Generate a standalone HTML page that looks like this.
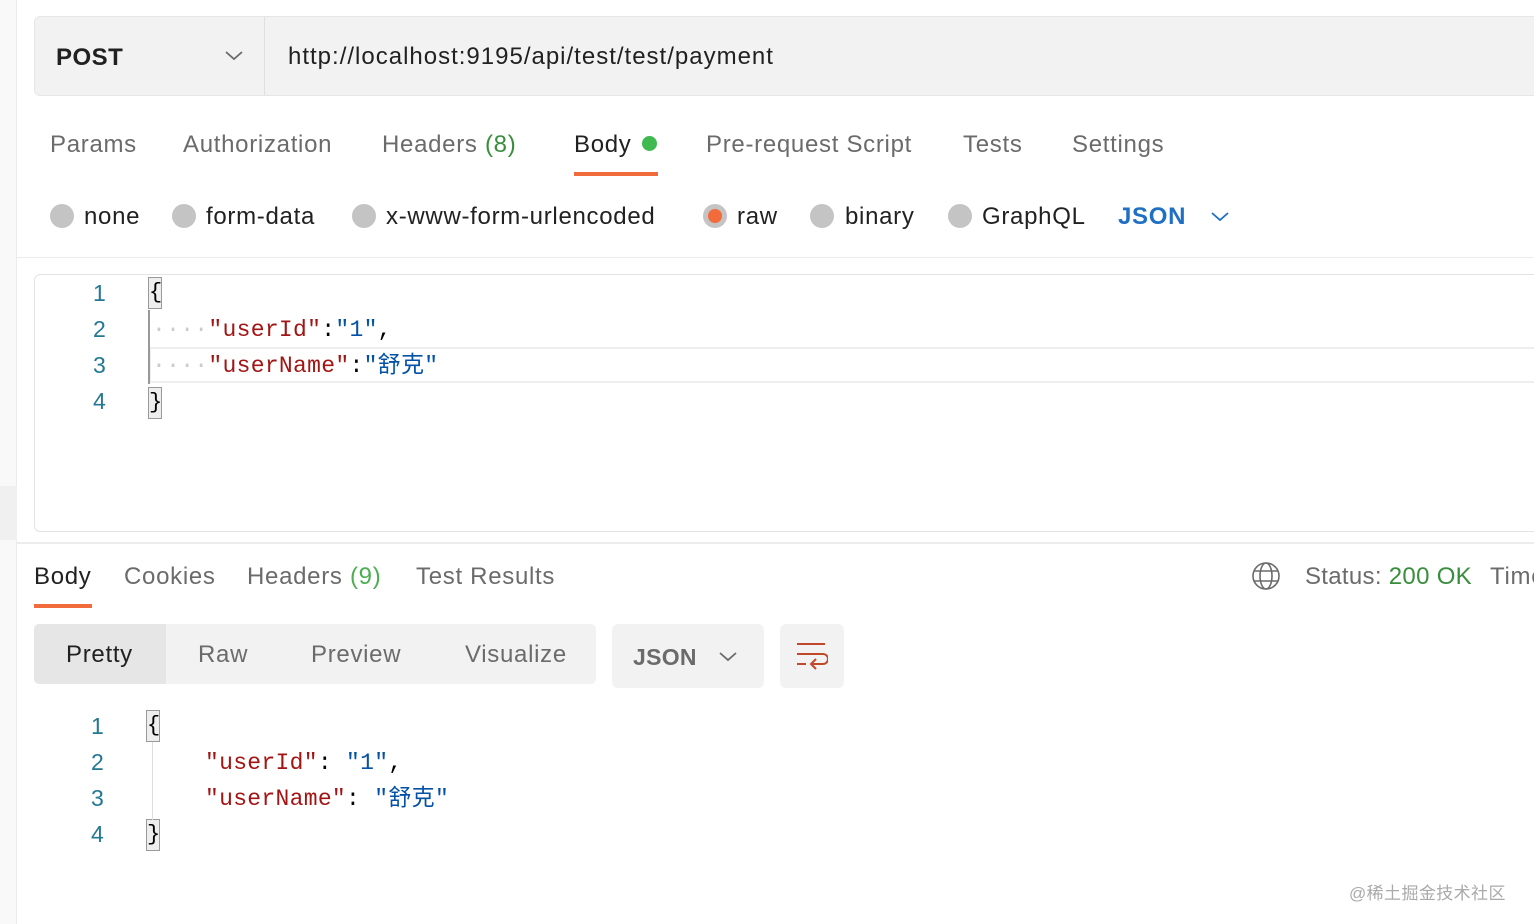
<!DOCTYPE html>
<html><head><meta charset="utf-8"><style>
*{margin:0;padding:0;box-sizing:border-box}
body{width:1534px;height:924px;background:#fff;position:relative;overflow:hidden;font-family:"Liberation Sans","Noto Sans CJK SC",sans-serif;}
.a{position:absolute;white-space:nowrap}
.t{font-size:24px;color:#6b6b6b;line-height:30px;letter-spacing:0.7px}
.m{font-family:"Liberation Mono","Noto Sans CJK SC",monospace;font-size:23px;line-height:30px;letter-spacing:0.3px}
.r{color:#a31515}.b{color:#0451a5}.n{color:#237893;font-family:"Liberation Sans",sans-serif;font-size:23px}
.rad{position:absolute;width:24px;height:24px;border-radius:50%;background:#c4c4c4;top:204px}
.br{position:absolute;width:14px;height:32px;background:#eee;border:1px solid #999;font-family:"Liberation Mono",monospace;font-size:22px;line-height:30px;text-align:center;color:#000}
</style></head><body>
<div class="a" style="left:0;top:0;width:17px;height:924px;background:#f9f9f9;border-right:1px solid #ececec"></div>
<div class="a" style="left:0;top:486px;width:17px;height:54px;background:#f0f0f0"></div>
<div class="a" style="left:34px;top:16px;width:1510px;height:80px;background:#f2f2f2;border:1px solid #e6e6e6;border-radius:6px"></div>
<div class="a" style="left:264px;top:17px;width:1px;height:78px;background:#e0e0e0"></div>
<div class="a" style="left:56px;top:43px;font-size:24px;font-weight:bold;color:#212121;line-height:30px;letter-spacing:0.5px">POST</div>
<svg class="a" style="left:224px;top:48px" width="20" height="14"><path d="M2 4 L10 11 L18 4" fill="none" stroke="#6b6b6b" stroke-width="1.8"/></svg>
<div class="a" style="left:288px;top:42px;font-size:24px;color:#212121;line-height:30px;letter-spacing:1px">http://localhost:9195/api/test/test/payment</div>
<div class="a t" style="left:50px;top:130px">Params</div>
<div class="a t" style="left:183px;top:130px">Authorization</div>
<div class="a t" style="left:382px;top:130px">Headers <span style="color:#388e3c">(8)</span></div>
<div class="a t" style="left:574px;top:130px;color:#212121">Body</div>
<div class="a" style="left:642px;top:136px;width:15px;height:15px;border-radius:50%;background:#3fb950"></div>
<div class="a" style="left:574px;top:172px;width:84px;height:4px;background:#f26b3a"></div>
<div class="a t" style="left:706px;top:130px">Pre-request Script</div>
<div class="a t" style="left:963px;top:130px">Tests</div>
<div class="a t" style="left:1072px;top:130px">Settings</div>
<div class="rad" style="left:50px"></div><div class="a t" style="left:84px;top:202px;color:#212121">none</div>
<div class="rad" style="left:172px"></div><div class="a t" style="left:206px;top:202px;color:#212121">form-data</div>
<div class="rad" style="left:352px"></div><div class="a t" style="left:386px;top:202px;color:#212121">x-www-form-urlencoded</div>
<div class="rad" style="left:703px"></div><div class="a" style="left:708px;top:209px;width:14px;height:14px;border-radius:50%;background:#f26b3a"></div><div class="a t" style="left:737px;top:202px;color:#212121">raw</div>
<div class="rad" style="left:810px"></div><div class="a t" style="left:845px;top:202px;color:#212121">binary</div>
<div class="rad" style="left:948px"></div><div class="a t" style="left:982px;top:202px;color:#212121">GraphQL</div>
<div class="a t" style="left:1118px;top:202px;color:#1f6fc5;font-weight:bold">JSON</div>
<svg class="a" style="left:1210px;top:209px" width="20" height="14"><path d="M2 4 L10 11 L18 4" fill="none" stroke="#1f6fc5" stroke-width="1.8"/></svg>
<div class="a" style="left:17px;top:257px;width:1517px;height:1px;background:#ececec"></div>
<div class="a" style="left:34px;top:274px;width:1510px;height:258px;border:1px solid #e3e3e3;border-radius:6px"></div>
<div class="a" style="left:149px;top:347px;width:1390px;height:36px;border:2px solid #eeeeee;border-right:none"></div>
<div class="a" style="left:148px;top:310px;width:2px;height:74px;background:#999"></div>
<div class="a n" style="left:93px;top:280px">1</div>
<div class="a n" style="left:93px;top:316px">2</div>
<div class="a n" style="left:93px;top:352px">3</div>
<div class="a n" style="left:93px;top:388px">4</div>
<div class="br" style="left:148px;top:277px">{</div>
<div class="br" style="left:148px;top:387px">}</div>
<div class="a m" style="left:152px;top:315px"><span style="color:#ccc">····</span><span class="r">"userId"</span>:<span class="b">"1"</span>,</div>
<div class="a m" style="left:152px;top:351px"><span style="color:#ccc">····</span><span class="r">"userName"</span>:<span class="b">"舒克"</span></div>
<div class="a" style="left:17px;top:542px;width:1517px;height:2px;background:#ececec"></div>
<div class="a t" style="left:34px;top:562px;color:#212121">Body</div>
<div class="a" style="left:34px;top:604px;width:58px;height:4px;background:#f26b3a"></div>
<div class="a t" style="left:124px;top:562px">Cookies</div>
<div class="a t" style="left:247px;top:562px">Headers <span style="color:#4caf50">(9)</span></div>
<div class="a t" style="left:416px;top:562px">Test Results</div>
<svg class="a" style="left:1251px;top:561px" width="30" height="30" viewBox="0 0 30 30"><g fill="none" stroke="#6b6b6b" stroke-width="1.6"><circle cx="15" cy="15" r="13"/><ellipse cx="15" cy="15" rx="6" ry="13"/><path d="M3 10H27M3 20H27"/></g></svg>
<div class="a t" style="left:1305px;top:562px;letter-spacing:0.3px">Status: <span style="color:#388e3c">200 OK</span></div>
<div class="a t" style="left:1490px;top:562px">Time</div>
<div class="a" style="left:34px;top:624px;width:562px;height:60px;background:#f2f2f2;border-radius:5px"></div>
<div class="a" style="left:34px;top:624px;width:132px;height:60px;background:#e6e6e6;border-radius:5px 0 0 5px"></div>
<div class="a t" style="left:66px;top:640px;color:#212121">Pretty</div>
<div class="a t" style="left:198px;top:640px">Raw</div>
<div class="a t" style="left:311px;top:640px">Preview</div>
<div class="a t" style="left:465px;top:640px">Visualize</div>
<div class="a" style="left:612px;top:624px;width:152px;height:64px;background:#f2f2f2;border-radius:6px"></div>
<div class="a t" style="left:633px;top:642px;color:#6b6b6b;font-weight:bold;font-size:23px;letter-spacing:0.3px">JSON</div>
<svg class="a" style="left:718px;top:649px" width="20" height="14"><path d="M2 4 L10 11 L18 4" fill="none" stroke="#6b6b6b" stroke-width="1.8"/></svg>
<div class="a" style="left:780px;top:624px;width:64px;height:64px;background:#f2f2f2;border-radius:6px"></div>
<svg class="a" style="left:796px;top:642px" width="32" height="30" viewBox="0 0 32 30"><g fill="none" stroke="#c0492b" stroke-width="2"><path d="M1 2H29M1 12H27M1 22H10"/><path d="M27 12a5 5 0 0 1 0 10H16"/><path d="M20 17l-5 5 5 5"/></g></svg>
<div class="a n" style="left:91px;top:713px">1</div>
<div class="a n" style="left:91px;top:749px">2</div>
<div class="a n" style="left:91px;top:785px">3</div>
<div class="a n" style="left:91px;top:821px">4</div>
<div class="br" style="left:146px;top:710px">{</div>
<div class="br" style="left:146px;top:819px">}</div>
<div class="a" style="left:152px;top:742px;width:1px;height:78px;background:#ddd"></div>
<div class="a m" style="left:205px;top:748px"><span class="r">"userId"</span>: <span class="b">"1"</span>,</div>
<div class="a m" style="left:205px;top:784px"><span class="r">"userName"</span>: <span class="b">"舒克"</span></div>
<div class="a" style="left:1349px;top:879px;font-size:17px;color:#aaa;letter-spacing:0.4px">@稀土掘金技术社区</div>
</body></html>
